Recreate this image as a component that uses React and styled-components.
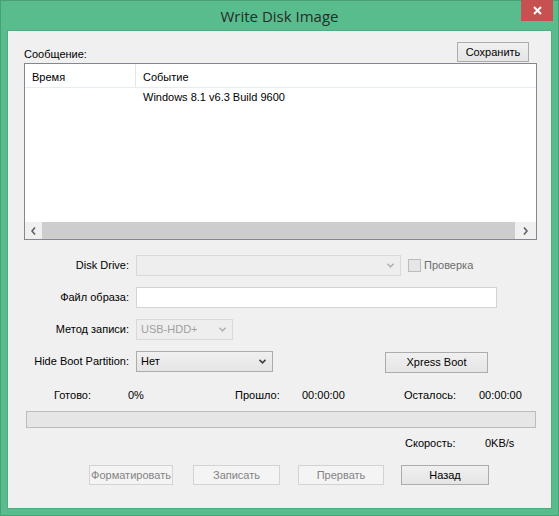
import React from 'react'
import styled, { createGlobalStyle } from 'styled-components'

const GlobalStyle = createGlobalStyle`
    body {
        margin: 0;
        font-family: "Liberation Sans", Arial, sans-serif;
        font-size: 11px;
        line-height: 13px;
        color: #000;
    }
`

const Window = styled.div`
    width: 559px;
    height: 516px;
    box-sizing: border-box;
    background: #59bc8d;
    border: 1px solid #47a077;
    padding: 0 7px 7px;
    display: flex;
    flex-direction: column;
`

const TitleBar = styled.div`
    margin-top: -1px;
    height: 31px;
    flex-shrink: 0;
    display: grid;
    grid-template-columns: 1fr auto 1fr;
`

const Title = styled.div`
    grid-column: 2;
    align-self: center;
    font-family: "Open Sans", "Noto Sans", sans-serif;
    font-size: 15px;
    line-height: 20px;
    color: #2a2a2a;
    margin-top: 1px;
`

const CloseButton = styled.div`
    grid-column: 3;
    justify-self: end;
    align-self: start;
    width: 32px;
    height: 21px;
    margin-right: -2px;
    background: #c75050;
    display: flex;
    align-items: center;
    justify-content: center;
`

const Client = styled.div`
    flex: 1;
    background: #f0f0f0;
    box-shadow: 0 0 0 1px #4fab80;
    display: flex;
    flex-direction: column;
`

const TopRow = styled.div`
    margin-top: 11px;
    height: 20px;
    padding: 0 22px 0 16px;
    display: flex;
    justify-content: space-between;
    align-items: flex-end;
`

const Caption = styled.span`
    margin-bottom: 1px;
`

const Button = styled.div`
    box-sizing: border-box;
    width: ${p => p.$w}px;
    height: ${p => p.$h || 20}px;
    border: 1px solid ${p => (p.disabled ? '#d3d3d3' : '#acacac')};
    background: ${p => (p.disabled ? '#f4f4f4' : 'linear-gradient(#f0f0f0, #e5e5e5)')};
    color: ${p => (p.disabled ? '#838383' : '#000')};
    display: flex;
    align-items: center;
    justify-content: center;
    white-space: nowrap;
    overflow: visible;
`

const ListBox = styled.div`
    margin: 1px 14px 0 16px;
    height: 177px;
    box-sizing: border-box;
    border: 1px solid #828790;
    background: #fff;
    display: flex;
    flex-direction: column;
`

const ListHeader = styled.div`
    height: 24px;
    box-sizing: border-box;
    border-bottom: 1px solid #e3edf7;
    display: flex;
    flex-shrink: 0;
`

const HeadCell = styled.div`
    width: ${p => (p.$w ? `${p.$w}px` : 'auto')};
    flex: ${p => (p.$w ? 'none' : '1')};
    box-sizing: border-box;
    padding: 7px 0 0 7px;
    border-right: ${p => (p.$w ? '1px solid #e5e5e5' : 'none')};
`

const ListBody = styled.div`
    flex: 1;
`

const ListRow = styled.div`
    display: flex;
    padding-top: 3px;
`

const Cell = styled.div`
    width: ${p => (p.$w ? `${p.$w}px` : 'auto')};
    flex: ${p => (p.$w ? 'none' : '1')};
    padding-left: ${p => (p.$w ? 0 : 7)}px;
`

const HScroll = styled.div`
    height: 17px;
    flex-shrink: 0;
    display: grid;
    grid-template-columns: 17px 1fr 21px;
    background: #f0f0f0;
`

const ScrollArrow = styled.div`
    display: flex;
    align-items: center;
    justify-content: center;
`

const ScrollThumb = styled.div`
    background: #cdcdcd;
`

const Form = styled.div`
    margin-top: 15px;
    display: flex;
    flex-direction: column;
    gap: 11px;
`

const FormRow = styled.div`
    display: flex;
    align-items: center;
    height: 21px;
`

const FieldLabel = styled.div`
    width: 121px;
    margin-right: 7px;
    text-align: right;
    white-space: nowrap;
`

const Combo = styled.div`
    box-sizing: border-box;
    width: ${p => p.$w}px;
    height: 21px;
    border: 1px solid ${p => (p.disabled ? '#d9d9d9' : '#acacac')};
    background: ${p => (p.disabled ? '#eeeeee' : 'linear-gradient(#f0f0f0, #e5e5e5)')};
    color: ${p => (p.disabled ? '#a0a0a0' : '#000')};
    padding: 0 6px 0 4px;
    display: flex;
    align-items: center;
    justify-content: space-between;
`

const TextInput = styled.div`
    box-sizing: border-box;
    width: ${p => p.$w}px;
    height: 21px;
    border: 1px solid #d3d3d3;
    background: #fff;
`

const CheckBox = styled.div`
    width: 13px;
    height: 13px;
    box-sizing: border-box;
    margin-left: 7px;
    border: 1px solid #bcbcbc;
    background: #e6e6e6;
`

const CheckLabel = styled.span`
    margin-left: 3px;
    color: #6d6d6d;
`

const StatusRow = styled.div`
    margin-top: ${p => p.$top}px;
    padding-left: ${p => p.$left}px;
    display: flex;
    white-space: nowrap;
`

const StatusCell = styled.span`
    width: ${p => (p.$w ? `${p.$w}px` : 'auto')};
    flex: none;
`

const Progress = styled.div`
    margin: 9px 0 0 18px;
    width: 510px;
    height: 17px;
    box-sizing: border-box;
    border: 1px solid #bcbcbc;
    background: #e6e6e6;
`

const ButtonBar = styled.div`
    margin-top: 15px;
    padding-left: 81px;
    display: flex;
`

const Chevron = ({ color = '#404040', dir = 'down' }) => {
    if (dir === 'left') {
        return (
            <svg width="5" height="8" viewBox="0 0 5 8">
                <polyline points="4,0.5 1,4 4,7.5" fill="none" stroke="#606060" strokeWidth="1.6" />
            </svg>
        )
    }
    if (dir === 'right') {
        return (
            <svg width="5" height="8" viewBox="0 0 5 8">
                <polyline points="1,0.5 4,4 1,7.5" fill="none" stroke="#606060" strokeWidth="1.6" />
            </svg>
        )
    }
    return (
        <svg width="7" height="5" viewBox="0 0 7 5">
            <polyline points="0.5,0.8 3.5,3.8 6.5,0.8" fill="none" stroke={color} strokeWidth="1.6" />
        </svg>
    )
}

export default function App() {
    return (
        <>
            <GlobalStyle />
            <Window>
                <TitleBar>
                    <Title>Write Disk Image</Title>
                    <CloseButton>
                        <svg width="9" height="9" viewBox="0 0 9 9">
                            <path d="M1 1 L8 8 M8 1 L1 8" stroke="#fff" strokeWidth="2" />
                        </svg>
                    </CloseButton>
                </TitleBar>
                <Client>
                    <TopRow>
                        <Caption>Сообщение:</Caption>
                        <Button $w={72}>Сохранить</Button>
                    </TopRow>
                    <ListBox>
                        <ListHeader>
                            <HeadCell $w={111}>Время</HeadCell>
                            <HeadCell>Событие</HeadCell>
                        </ListHeader>
                        <ListBody>
                            <ListRow>
                                <Cell $w={111} />
                                <Cell>Windows 8.1 v6.3 Build 9600</Cell>
                            </ListRow>
                        </ListBody>
                        <HScroll>
                            <ScrollArrow><Chevron dir="left" /></ScrollArrow>
                            <ScrollThumb />
                            <ScrollArrow><Chevron dir="right" /></ScrollArrow>
                        </HScroll>
                    </ListBox>
                    <Form>
                        <FormRow>
                            <FieldLabel>Disk Drive:</FieldLabel>
                            <Combo $w={265} disabled>
                                <span />
                                <Chevron color="#b4b4b4" />
                            </Combo>
                            <CheckBox />
                            <CheckLabel>Проверка</CheckLabel>
                        </FormRow>
                        <FormRow>
                            <FieldLabel>Файл образа:</FieldLabel>
                            <TextInput $w={361} />
                        </FormRow>
                        <FormRow>
                            <FieldLabel>Метод записи:</FieldLabel>
                            <Combo $w={97} disabled>
                                <span>USB-HDD+</span>
                                <Chevron color="#b4b4b4" />
                            </Combo>
                        </FormRow>
                        <FormRow>
                            <FieldLabel>Hide Boot Partition:</FieldLabel>
                            <Combo $w={137}>
                                <span>Нет</span>
                                <Chevron />
                            </Combo>
                            <Button $w={103} $h={21} style={{ marginLeft: 112, marginTop: 2 }}>Xpress Boot</Button>
                        </FormRow>
                    </Form>
                    <StatusRow $top={17} $left={46}>
                        <StatusCell $w={74}>Готово:</StatusCell>
                        <StatusCell $w={107}>0%</StatusCell>
                        <StatusCell $w={67}>Прошло:</StatusCell>
                        <StatusCell $w={102}>00:00:00</StatusCell>
                        <StatusCell $w={75}>Осталось:</StatusCell>
                        <StatusCell>00:00:00</StatusCell>
                    </StatusRow>
                    <Progress />
                    <StatusRow $top={9} $left={397}>
                        <StatusCell $w={80}>Скорость:</StatusCell>
                        <StatusCell>0KB/s</StatusCell>
                    </StatusRow>
                    <ButtonBar>
                        <Button $w={84} disabled>Форматировать</Button>
                        <Button $w={87} disabled style={{ marginLeft: 20 }}>Записать</Button>
                        <Button $w={86} disabled style={{ marginLeft: 18 }}>Прервать</Button>
                        <Button $w={88} style={{ marginLeft: 17 }}>Назад</Button>
                    </ButtonBar>
                </Client>
            </Window>
        </>
    )
}
